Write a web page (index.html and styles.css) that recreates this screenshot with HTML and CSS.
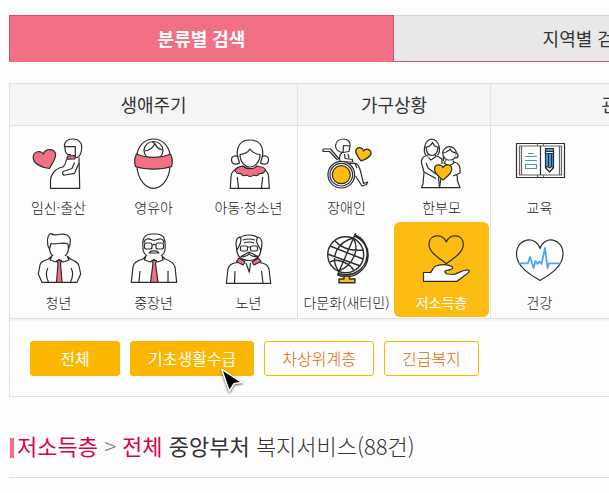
FILE: index.html
```html
<!DOCTYPE html>
<html lang="ko">
<head>
<meta charset="utf-8">
<title>복지서비스 검색</title>
<link rel="stylesheet" href="styles.css">
</head>
<body>
<main class="page">
  <nav class="tabs">
    <button class="tab tab-on" type="button">분류별 검색</button>
    <button class="tab" type="button">지역별 검색</button>
  </nav>

  <div class="finder">
    <div class="groups">
      <section class="group wide">
        <h2>생애주기</h2>
        <div class="items">
          <button class="item" type="button">
            <svg viewBox="0 0 61 52"><path class="pink" d="M21.5 30.5C15 29.8 4.500 26 5.200 19C5.800 13 13 12 15.500 16C17 10.500 25.500 10 27.500 15.500C28.800 20 24 25.500 21.500 30.500Z"/><path d="M38.500 21.500C38 25 37 27 35 29C28 30 22.500 36 22.500 43V50.300H51.700L51 19.500"/><path d="M36.500 9V6.500C37.500 2.500 41 1 45 1C50 1 53.700 4 53.700 9C53.700 14 52.500 18 49 19.500H47.300V8.700H36.800L37.500 14L39.500 16.500H43"/><path class="pink" d="M39.500 18.200L47 17.500V20.800L38.800 21.200Z"/><path d="M46.500 24.500L44 30.500L35 33.500C34 36 35 37.500 37 37L46.500 35.300L51 25"/></svg>
            <span>임신·출산</span>
          </button>
          <button class="item" type="button">
            <svg viewBox="0 0 61 52"><path d="M14 16C16 7 22 1 30.500 1S45 7 47 16M14 29C15 41 22 50.300 30.500 50.300S46 41 47 29"/><ellipse cx="30.500" cy="12.500" rx="9.500" ry="9"/><path d="M21.500 13C26 12.500 30 10 32 5.500C33 9 36 11 39.500 12M29 3.500L32.500 6"/><path class="pink" d="M13.500 16C24 20.500 37 20.500 47.500 16C49.500 20 50 24 48.500 28.500C38 32 23 32 12.500 28.500C11 24 11.500 20 13.500 16Z"/></svg>
            <span>영유아</span>
          </button>
          <button class="item" type="button">
            <svg viewBox="0 0 61 52"><path d="M19.500 18C18 8 23 2 32 2S46 8 44.500 18"/><path d="M22 16.500C27 16 30 14.500 32 11C34 14.500 37 16 42 16.500C42 24 37 29 32 29S22 24 22 16.500Z"/><path d="M20.500 19C17 16.500 13 18.500 13.500 22.500C14 26.500 18 27 21.500 25L19.500 18M43.500 19C47 16.500 51 18.500 50.500 22.500C50 26.500 46 27 42.500 25L44.500 18"/><path d="M18 31.500C14.500 33 13 36 13 39L12.300 50.300H51.300L50.600 39C50.500 36 49 33 46 31.500M19.300 39L20.500 50M44.700 39L43.500 50"/><path class="pink" d="M25 28C28 31.500 36 31.500 39 28C43 28.500 47 30 47.500 32C46 35.500 43.500 36 41 35.500C40 38 37.500 38 35.500 37C34 39 30.500 39 29 37C27 38 24 38 23 35.500C20 36 17.500 34.500 17 32C18.500 29 22 28.500 25 28Z"/></svg>
            <span>아동·청소년</span>
          </button>
          <button class="item" type="button">
            <svg viewBox="0 0 61 52"><path d="M21.500 16L20 13C19 7 19 2 23 .5C25 2.500 28 2 31 1.500C37 .5 42 2 42.300 7C42.500 10 41.800 13 40.500 16M21.500 16L23 10.500C29 12 34 8.500 40 11L40.500 16C40 22 35.500 25.300 31 25.300S22 22 21.500 16Z"/><path d="M24 23L20.500 26C15 28 12.500 29 12 32L10.300 41L14 49.300H49L52.700 41L51 33C50 29 47 28 42.500 26L39 23M20 35C17.500 39 18 44 20.500 49M43 35C45.500 39 45 44 42.500 49M24 23L22 27L28 29L31 26.500L35 29L41 27L39 23"/><path class="pink" d="M29 27.500H33.500L32.500 30.500L34 49.300H28.500L30 30.500Z"/></svg>
            <span>청년</span>
          </button>
          <button class="item" type="button">
            <svg viewBox="0 0 61 52"><path d="M20 14C19 6 21 1 29 1H33C41 1 43 6 42 17C41 22 36 25.500 31 25.500S21 22 20 17Z"/><path d="M21 10C22 4 26 6 31 7.500C36 6 40 4 41 10"/><rect x="21.500" y="10" width="7.500" height="6" rx="2"/><rect x="33" y="10" width="7.500" height="6" rx="2"/><path d="M29 12Q31 10.800 33 12M26 20Q28 17.500 31 18Q34 17.500 36 20Z"/><path d="M23 23L20 26C13 28 11 30 10 34L8.300 49.300H53.700L52 34C51 30 48 28 42 26L39 23M17 38L16 49M45 38V49M23 23L21.500 27L27.500 29L31 26.500L35 29L40 27L39 23"/><path class="pink" d="M29 27.500H33.500L32.500 30.500L35 49.300H27.500L30 30.500Z"/></svg>
            <span>중장년</span>
          </button>
          <button class="item" type="button">
            <svg viewBox="0 0 61 52"><path d="M20 29.500C13 30 11 32 10 36L8.300 50.300H52.700L51 36C50 32 47 30 41 29.500M17 38L16.500 50M43.500 38L45 50M28 30L31.300 39.300L32.500 30"/><path d="M19 14C17.500 22 23 27.500 31 27.500S44 22 42.500 14L40 5C36 1 26 1 22 5Z"/><path d="M22 4C18 5 17 9 19 17C20.500 14 23 11 23 7ZM40 4C43.500 5 45 9 43 17C41 14 38.500 11 38.500 7ZM25 7Q31 5 37 7M26 10Q31 8 36 10"/><rect x="22.500" y="13" width="7" height="5" rx="1.500"/><rect x="32.500" y="13" width="7" height="5" rx="1.500"/><path d="M29.500 14H32.500M31 19L23 23.500Q29 24 31 20.500Q33 24 40 23.500Z"/><path class="pink" d="M21 25L27 29L25 32L18.500 28.500ZM40.500 25L34 29L36 32L43 28.500Z"/></svg>
            <span>노년</span>
          </button>
        </div>
      </section>

      <section class="group narrow">
        <h2>가구상황</h2>
        <div class="items">
          <button class="item" type="button">
            <svg viewBox="0 0 61 52"><path class="gold" d="M45 23C42 19 38 14 40.500 11C43 8.500 47 10 47.500 13C50 9.500 55 11.500 55 15.500C54 20 49 21.500 45 23Z"/><path d="M7 11H14.500L23.500 21.500M7 11V13.500H13.500L21.500 22"/><path d="M27 14.500C22 14 19.300 11 19.500 7.500C20 3 24 1 28 1C32 1 34.500 4 34 8L27.500 7.500L27 14.500L33 13.500L34 8"/><path d="M26 14.500C23.500 17 23 20 24 23M28.500 16L29 20.500L36.500 21.500V24H26M32 16L33 20M37 25C43 25 43 29 44.500 33L47.500 45.500L51.700 44L50.500 46.500L46 48L39.500 38M32 25.500H39L41 30"/><circle cx="25.300" cy="36.700" r="13.300"/><circle cx="25.300" cy="36.700" r="11.300"/><circle class="gold" cx="25.300" cy="36.700" r="9"/></svg>
            <span>장애인</span>
          </button>
          <button class="item" type="button">
            <svg viewBox="0 0 61 52"><path d="M15 17C12 14 13 2 20.700 1C29 2 30 14 26.500 17M15 9C19 9 20 7 21.500 4.500C23 8 25 9 27 9C27 14 24.500 17.500 21 17.500S15 14 15 9ZM17.500 16L16 18.500L20 22L25 18.500L24 16"/><path d="M16 17.500C11 18.500 10 21 10.500 25L13 34L12 46L10.500 49.700H28.500L27.500 39M25.500 17.500L31 21V26M15 25L17 30L25 36M13 34L25 40.500"/><circle cx="38.500" cy="15.500" r="6.800"/><path d="M32 15Q37 14 39 11Q40 14 45 15M45 15C48 16 48 20 44 20M33 18C32 20 32 22 33 23M35 22.500L33 25L38 28L43 25L42 22.500M43 24C48 25 49.500 28 49 35L42 38M46 36L46.500 43L49 49.700H28.500L30 40"/><path class="gold" d="M32 42C28 38.500 23.500 36 23.500 31C23.500 26 30 25.500 32 29.500C34 25.500 40.700 26 40.700 31C40.700 36 36 38.500 32 42Z"/></svg>
            <span>한부모</span>
          </button>
          <button class="item" type="button">
            <svg class="globe" viewBox="0 0 61 52"><circle cx="29.700" cy="21.700" r="18"/><path d="M39.700 0L21.500 42"/><path class="bare" d="M38.500 3C47 6.500 52 14 51 23C49.500 36 37 45 23 40.500L22 42C37 48 51 37 52 24C53 14 47 5 39 2Z"/><path class="bare" d="M37 5C22 9 13 24 22.500 38M37 5C44 15 38 32 22.500 38M19 8C26 16 36 18 47 17M11.500 21L44.500 33M14 29C21 24 35 31 38 38M14 13L47 26"/><path class="gold" d="M28 43H33.500V46H39V49.700H23V46H28Z"/></svg>
            <span>다문화(새터민)</span>
          </button>
          <button class="item item-on" type="button">
            <svg viewBox="0 0 61 52"><path class="bare" d="M35.300 30.700C28 25 18 19.500 18 11.500C18 1 31.500 0 35.300 9C39 0 52.300 1 52.300 11.500C52.300 19.500 43 25 35.300 30.700Z"/><path d="M12.500 39.500H19.500C22 37 22 34 25 33C30 31.500 37 31.500 41 33.500C43 35.500 40 37 35 37.500C33 38 34 40 36 41L43 41.500C48 40 53 36 57.500 37C60 38 56 41 53 43L46 48.300H12.500Z"/></svg>
            <span>저소득층</span>
          </button>
        </div>
      </section>

      <section class="group wide">
        <h2>관심상황</h2>
        <div class="items items-one">
          <button class="item" type="button">
            <svg viewBox="0 0 61 52"><rect x="7.500" y="5.500" width="48" height="34"/><path class="thin" d="M10.500 8H52.500V37H10.500ZM12.500 8V37M50.500 8V37M28.500 5.500V8H34.500V5.500M28.500 39.500V37H34.500V39.500"/><path d="M31.500 8V37"/><path class="blue-line" d="M19 15.500H25M16 18.500H28M16 22.500H28M16.500 26.500H27.500V30.500H16.500Z"/><path class="blue" d="M36.500 10.500H44.500V29.500L40.500 33.500L36.500 29.500Z"/><path class="bare" d="M39.500 16V28M42.500 16V28"/><path d="M36.500 13.500H44.500V15.500H36.500ZM36.500 29.500L38.500 28.500L40.500 30L42.500 28.500L44.500 29.500L40.500 34Z"/></svg>
            <span>교육</span>
          </button>
          <button class="item" type="button">
            <svg viewBox="0 0 61 52"><path d="M31 47.500C22 42 7.500 34 7.500 21C7.500 5 27 2 31 15.500C35 2 54 5 54 21C54 34 40 42 31 47.500Z"/><path class="pulse" d="M9 30.300H19L21 24L24.500 35L26.500 28L28.500 31L30.500 28.500L32.500 31L36 15L38.500 35L40 30.300H51.500"/></svg>
            <span>건강</span>
          </button>
        </div>
      </section>
    </div>

    <div class="filters">
      <button class="chip chip-on" type="button">전체</button>
      <button class="chip chip-on" type="button">기초생활수급<svg class="cursor" viewBox="0 0 22 24"><path d="M2 2L19 13L12.500 14L8.500 20.500Z"/></svg></button>
      <button class="chip" type="button">차상위계층</button>
      <button class="chip" type="button">긴급복지</button>
    </div>
  </div>

  <h1 class="result"><b class="red">저소득층</b> <span class="gt">&gt;</span> <b class="red">전체</b> <b>중앙부처</b> 복지서비스(88건)</h1>
</main>
</body>
</html>
```
FILE: styles.css
```css
* {
  box-sizing: border-box;
}

body {
  margin: 0;
  overflow: hidden;
  background: #fdfdfd;
  color: #333;
  font-family: "Noto Sans CJK KR", sans-serif;
}

button {
  margin: 0;
  padding: 0;
  border: 0;
  background: none;
  color: inherit;
  font: inherit;
}

/* The search panel keeps a desktop width and runs past narrow windows. */
.page {
  min-width: 788px;
  padding: 15px 9px;
}

.tabs {
  display: grid;
  grid-template-columns: 1fr 1fr;
  margin-bottom: 21px;
}

.tab {
  height: 47px;
  padding-bottom: 2px;
  border-top: 1px solid #d3d3d3;
  border-bottom: 1px solid #c9566a;
  background: #e8e8e8;
  color: #333;
  font-size: 18px;
  font-weight: 400;
}

.tab-on {
  border: 1px solid #c9566a;
  border-bottom-color: #f27086;
  background: #f27086;
  color: #fff;
  font-weight: 700;
}

.finder {
  border: 1px solid #e2e2e2;
}

.groups {
  display: grid;
  grid-template-columns: 287px 193px 1fr;
  border-bottom: 1px solid #e2e2e2;
  box-shadow: 0 2px 0 #f5f5f5;
}

.group + .group {
  border-left: 1px solid #e2e2e2;
}

.group h2 {
  height: 42px;
  margin: 0;
  border-bottom: 1px solid #e2e2e2;
  background: #f5f5f5;
  color: #333;
  font-size: 18px;
  font-weight: 400;
  line-height: 40px;
  text-align: center;
}

.items {
  display: grid;
  grid-template-columns: repeat(3, 95px);
  padding: 1px;
}

.narrow .items {
  grid-template-columns: repeat(2, 95px);
}

.items-one {
  grid-template-columns: 95px;
}

.item {
  display: flex;
  flex-direction: column;
  align-items: center;
  height: 95px;
  padding-top: 11px;
  border-radius: 6px;
  color: #222;
  font-size: 14px;
  font-weight: 300;
  line-height: 20px;
  white-space: nowrap;
}

.item svg {
  flex: none;
  width: 61px;
  height: 52px;
  margin-bottom: 7px;
  fill: #fff;
  stroke: #2d2d2d;
  stroke-width: 1.2;
  stroke-linejoin: round;
}

.item .globe {
  stroke-width: 1.4;
}

.item-on {
  background: #fdbc11;
  color: #fff;
  font-weight: 400;
}

.item .pink {
  fill: #f27086;
}

.item .gold {
  fill: #fdbc11;
}

.item .bare,
.item .thin {
  fill: none;
}

.item .thin {
  stroke: #666;
}

.item .blue {
  fill: #4a9cf5;
}

.item .blue-line {
  fill: none;
  stroke: #4a90e2;
}

.item .pulse {
  fill: none;
  stroke: #4da3ff;
  stroke-width: 1.8;
}

.filters {
  display: flex;
  gap: 10px;
  padding: 22px 20px 20px;
}

.chip {
  position: relative;
  min-width: 90px;
  height: 35px;
  padding: 0 17px 2px;
  border: 1px solid #fab600;
  border-radius: 3px;
  color: #e06500;
  font-size: 16px;
  font-weight: 300;
}

.chip-on {
  background: #fab600;
  color: #fff;
  font-weight: 400;
}

.cursor {
  position: absolute;
  top: 27px;
  left: 90px;
  width: 22px;
  height: 24px;
  fill: #000;
  stroke: #fff;
  stroke-width: 3;
  paint-order: stroke;
  filter: drop-shadow(0 1px 1px #555);
}

.result {
  display: flow-root;
  margin: 31px 0 0;
  padding-bottom: 15px;
  border-bottom: 1px solid #ddd;
  font-size: 22px;
  font-weight: 300;
  line-height: 34px;
}

.result::before {
  content: "";
  display: inline-block;
  width: 4px;
  height: 20px;
  margin: 0 3px 0 1px;
  background: #f27086;
  vertical-align: -3px;
}

.result b {
  font-weight: 400;
}

.result .red {
  color: #dc004b;
}

.result .gt {
  color: #777;
}
```
